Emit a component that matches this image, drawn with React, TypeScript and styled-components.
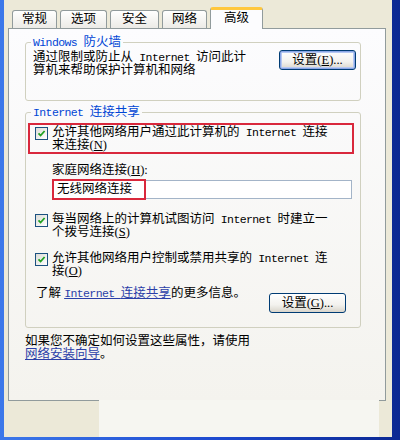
import React from 'react'
import styled, { createGlobalStyle } from 'styled-components'

const GlobalStyle = createGlobalStyle`
	html, body {
		margin: 0;
		padding: 0;
	}

	body {
		width: 400px;
		height: 440px;
		overflow: hidden;
		font-family: "Liberation Serif", "Noto Sans CJK SC", serif;
		font-size: 12.5px;
		line-height: 13px;
		color: #000;
	}
`

const Frame = styled.div`
	width: 400px;
	height: 440px;
	box-sizing: border-box;
	padding: 0 8px 3px 4px;
	display: flex;
	background: linear-gradient(90deg, #3c78ea 0%, #1d49cf 55%, #0b2892 100%);
`

const Dialog = styled.div`
	flex: 1;
	display: flex;
	flex-direction: column;
	padding: 7px 6px 0 4px;
	background: #ece9d8;
`

const TabRow = styled.div`
	display: flex;
	align-items: flex-end;
	gap: 3px;
	height: 22px;
	padding-left: 4px;
	margin-bottom: -1px;
	position: relative;
	z-index: 1;
`

const Tab = styled.div<{ $w: number; $active?: boolean }>`
	width: ${({ $w }) => $w}px;
	height: ${({ $active }) => ($active ? 22 : 18)}px;
	margin-bottom: ${({ $active }) => ($active ? 0 : 1)}px;
	box-sizing: border-box;
	display: flex;
	align-items: center;
	justify-content: center;
	border: 1px solid #919b9c;
	border-bottom: none;
	border-top: ${({ $active }) => ($active ? '3px solid #ffc73c' : '1px solid #919b9c')};
	border-radius: 3px 3px 0 0;
	background: ${({ $active }) => ($active ? '#fcfcfe' : 'linear-gradient(#ffffff, #ecebe6)')};
	padding-bottom: ${({ $active }) => ($active ? 2 : 0)}px;
`

const Panel = styled.div`
	height: 373px;
	box-sizing: border-box;
	border: 1px solid #919b9c;
	background: linear-gradient(#fcfcfe, #f4f3ee);
	padding: 7px 24px 0 16px;
`

const Group = styled.fieldset<{ $top?: number }>`
	margin: ${({ $top }) => $top ?? 0}px 0 0;
	padding: 2px 4px 23px 7px;
	border: 1px solid #d0d0bf;
	border-radius: 3px;
	min-width: 0;
`

const SharingGroup = styled(Group)`
	padding-top: 4px;
	padding-bottom: 14px;
`

const Legend = styled.legend`
	color: #0046d5;
	padding: 0 2px;
	margin-left: -2px;
	line-height: 13px;
`

const En = styled.span`
	font-family: "Liberation Mono", monospace;
	font-size: 11.5px;
	line-height: 10px;
	letter-spacing: -0.6px;
`

const FirewallRow = styled.div`
	display: flex;
	justify-content: space-between;
	align-items: flex-start;
`

const Text = styled.div`
	white-space: nowrap;
`

const XpButton = styled.button<{ $focus?: boolean }>`
	width: 77px;
	height: 20px;
	margin-top: ${({ $focus }) => ($focus ? -1 : 6)}px;
	padding: 0;
	font: inherit;
	color: #000;
	border: 1px solid #003c74;
	border-radius: 3px;
	background: linear-gradient(#ffffff 0%, #f3f2ee 60%, #d9d5cb 100%);
	box-shadow: ${({ $focus }) => ($focus ? 'inset 0 0 0 1px #8aa6e6, inset 0 0 0 2px #b6c8f2' : 'none')};
	flex: none;
`

const Marked = styled.div`
	border: 2px solid #d9283c;
	margin: 0 2px 0 -5px;
	padding: 1px 0 0 5px;
`

const CheckRow = styled.div<{ $top?: number }>`
	display: flex;
	gap: 4px;
	margin-top: ${({ $top }) => $top ?? 0}px;
	padding-left: ${({ $top }) => ($top === undefined ? 0 : 2)}px;
	white-space: nowrap;
`

const Box = styled.span`
	width: 13px;
	height: 13px;
	margin-top: 1px;
	box-sizing: border-box;
	flex: none;
	display: flex;
	align-items: center;
	justify-content: center;
	border: 1px solid #1c5180;
	background: linear-gradient(135deg, #dcdcd7, #ffffff);
`

const FieldLabel = styled.div`
	margin: 10px 0 0 19px;
`

const Field = styled.div`
	margin: 3px 0 0 19px;
	width: 300px;
	height: 19px;
	box-sizing: border-box;
	border: 1px solid #a3b4c8;
	background: #fff;
`

const FieldMark = styled.div`
	width: 94px;
	height: 21px;
	box-sizing: border-box;
	margin: -2px 0 0 -1px;
	padding-left: 3px;
	border: 2px solid #d9283c;
	line-height: 17px;
	white-space: nowrap;
`

const InfoRow = styled.div`
	display: flex;
	justify-content: space-between;
	align-items: flex-start;
	margin-top: 9px;
	padding: 0 10px 0 3px;
	white-space: nowrap;
`

const Link = styled.a`
	color: #2b3fa8;
	text-decoration: underline;
`

const Note = styled.div`
	margin-top: 7px;
	white-space: nowrap;
`

const Footer = styled.div`
	flex: 1;
	display: flex;
`

const FooterPatch = styled.div`
	flex: 1;
	margin: -1px 7px 0 91px;
	background: #f6f6f1;
`

const Check = () => (
	<Box>
		<svg width="9" height="9" viewBox="0 0 9 9">
			<path d="M1.5 4.3 L3.6 6.5 L7.6 2" fill="none" stroke="#21a121" strokeWidth="1.8" />
		</svg>
	</Box>
)

const tabs = [
	{ label: '常规', w: 45 },
	{ label: '选项', w: 47 },
	{ label: '安全', w: 49 },
	{ label: '网络', w: 45 },
	{ label: '高级', w: 53, active: true },
]

const App = () => {
	return (
		<>
			<GlobalStyle />
			<Frame>
				<Dialog>
					<TabRow>
						{tabs.map((tab) => (
							<Tab key={tab.label} $w={tab.w} $active={tab.active}>
								{tab.label}
							</Tab>
						))}
					</TabRow>
					<Panel>
						<Group>
							<Legend>
								<En>Windows </En>防火墙
							</Legend>
							<FirewallRow>
								<Text>
									通过限制或防止从<En> Internet </En>访问此计
									<br />
									算机来帮助保护计算机和网络
								</Text>
								<XpButton $focus>
									设置(<u>E</u>)...
								</XpButton>
							</FirewallRow>
						</Group>
						<SharingGroup $top={5}>
							<Legend>
								<En>Internet </En>连接共享
							</Legend>
							<Marked>
								<CheckRow>
									<Check />
									<span>
										允许其他网络用户通过此计算机的<En> Internet </En>连接
										<br />
										来连接(<u>N</u>)
									</span>
								</CheckRow>
							</Marked>
							<FieldLabel>
								家庭网络连接(<u>H</u>):
							</FieldLabel>
							<Field>
								<FieldMark>无线网络连接</FieldMark>
							</Field>
							<CheckRow $top={14}>
								<Check />
								<span>
									每当网络上的计算机试图访问<En> Internet </En>时建立一
									<br />
									个拨号连接(<u>S</u>)
								</span>
							</CheckRow>
							<CheckRow $top={13}>
								<Check />
								<span>
									允许其他网络用户控制或禁用共享的<En> Internet </En>连
									<br />
									接(<u>O</u>)
								</span>
							</CheckRow>
							<InfoRow>
								<span>
									了解{' '}
									<Link>
										<En>Internet </En>连接共享
									</Link>
									的更多信息。
								</span>
								<XpButton>
									设置(<u>G</u>)...
								</XpButton>
							</InfoRow>
						</SharingGroup>
						<Note>
							如果您不确定如何设置这些属性，请使用
							<br />
							<Link>网络安装向导</Link>。
						</Note>
					</Panel>
					<Footer>
						<FooterPatch />
					</Footer>
				</Dialog>
			</Frame>
		</>
	)
}

export default App
